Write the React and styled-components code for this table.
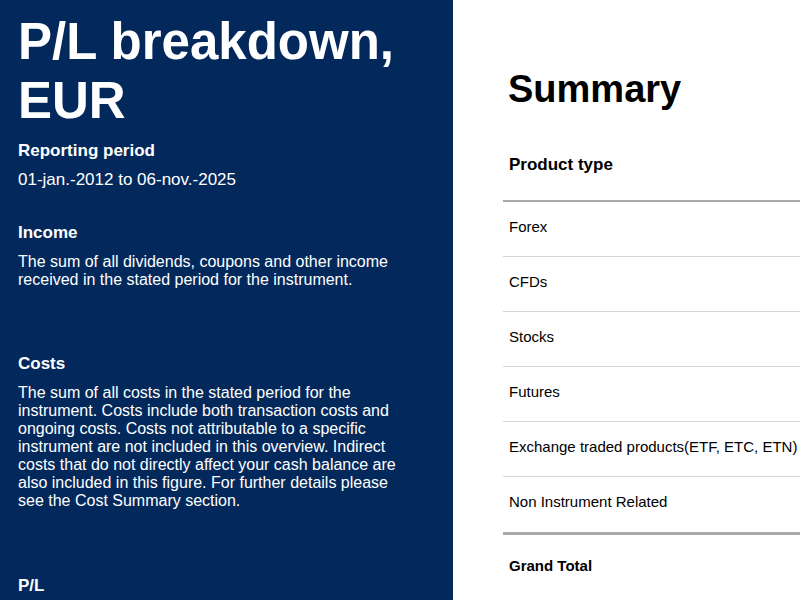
import React from "react";
import styled, { createGlobalStyle } from "styled-components";

const GlobalStyle = createGlobalStyle`
  html, body {
    margin: 0;
    padding: 0;
    height: 100%;
    overflow: hidden;
    background: #ffffff;
  }

  body {
    font-family: "Liberation Sans", Arial, sans-serif;
  }
`;

const rows = [
  "Forex",
  "CFDs",
  "Stocks",
  "Futures",
  "Exchange traded products(ETF, ETC, ETN)",
  "Non Instrument Related",
];

const App = () => {
  return (
    <>
      <GlobalStyle />
      <Page>
        <Sidebar>
          <Title>P/L breakdown, EUR</Title>

          <Label>Reporting period</Label>
          <Period>01-jan.-2012 to 06-nov.-2025</Period>

          <Label>Income</Label>
          <Description $gap={65}>
            The sum of all dividends, coupons and other income received in the
            stated period for the instrument.
          </Description>

          <Label>Costs</Label>
          <Description $gap={66}>
            The sum of all costs in the stated period for the instrument. Costs
            include both transaction costs and ongoing costs. Costs not
            attributable to a specific instrument are not included in this
            overview. Indirect costs that do not directly affect your cash
            balance are also included in this figure. For further details
            please see the Cost Summary section.
          </Description>

          <Label>P/L</Label>
        </Sidebar>

        <Main>
          <Heading>Summary</Heading>
          <Table>
            <HeadRow>Product type</HeadRow>
            {rows.map((name, i) => (
              <Row key={name} $last={i === rows.length - 1}>
                {name}
              </Row>
            ))}
            <TotalRow>Grand Total</TotalRow>
          </Table>
        </Main>
      </Page>
    </>
  );
};

const Page = styled.div`
  display: flex;
  width: 100vw;
  height: 100vh;
  overflow: hidden;
`;

const Sidebar = styled.aside`
  flex: 0 0 453px;
  box-sizing: border-box;
  padding: 12px 46px 0 18px;
  background-color: #03295c;
  color: #ffffff;
`;

const Title = styled.h1`
  margin: 0 0 11px;
  font-size: 51px;
  font-weight: 700;
  line-height: normal;
`;

const Label = styled.h3`
  margin: 0 0 10px;
  font-size: 17px;
  font-weight: 700;
  line-height: normal;
`;

const Period = styled.p`
  margin: -1px 0 33px;
  font-size: 17px;
  line-height: normal;
`;

const Description = styled.p`
  margin: 0 0 ${({ $gap }) => $gap}px;
  font-size: 16px;
  line-height: normal;
`;

const Main = styled.main`
  flex: 1 1 auto;
  min-width: 0;
  overflow: hidden;
  padding: 68px 0 0 50px;
  color: #000000;
`;

const Heading = styled.h2`
  margin: 0 0 15px;
  padding: 0 5px;
  font-size: 38px;
  font-weight: 700;
  line-height: normal;
`;

const Table = styled.div`
  width: 700px;
`;

const HeadRow = styled.div`
  box-sizing: border-box;
  height: 76px;
  padding: 29px 6px 0;
  font-size: 17px;
  font-weight: 700;
  border-bottom: 2px solid #a9a9a9;
`;

const Row = styled.div`
  box-sizing: border-box;
  height: ${({ $last }) => ($last ? "58px" : "55px")};
  padding: 16px 6px 0;
  font-size: 15px;
  border-bottom: ${({ $last }) =>
    $last ? "3px solid #a9a9a9" : "1px solid #d6d6d6"};
`;

const TotalRow = styled.div`
  box-sizing: border-box;
  height: 56px;
  padding: 22px 6px 0;
  font-size: 15px;
  font-weight: 700;
`;

export default App;
